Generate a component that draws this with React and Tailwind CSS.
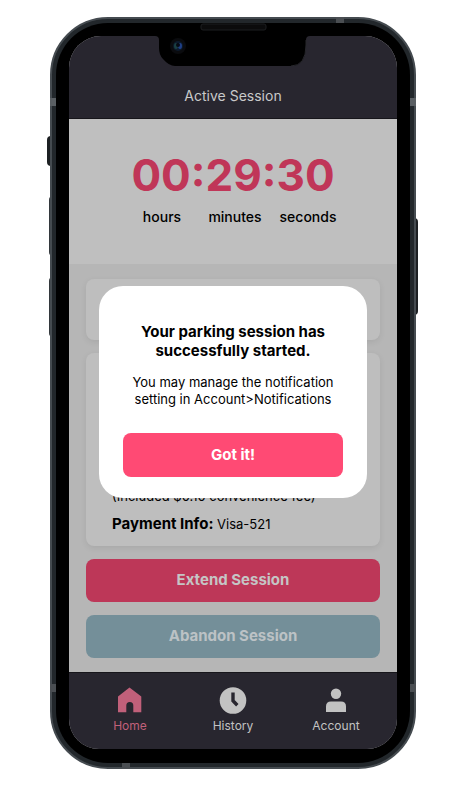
function Notch() {
  return (
    <svg
      className="absolute left-1/2 top-0 -translate-x-1/2"
      width="160"
      height="50"
      viewBox="0 0 160 50"
      aria-hidden="true"
    >
      <path
        d="M0 8H160V19H157Q153 19 153 23V28Q153 49 138 49H22Q16 49 10 42Q6 38 6 31V23Q6 19 2 19H0Z"
        fill="#000"
      />
      <path d="M153 23V28Q153 49 138 49" fill="none" stroke="#26262b" />
      <rect x="48" y="7" width="65" height="6" rx="2" fill="#0b0b0c" stroke="#1d1e20" />
      <circle cx="25" cy="29" r="8" fill="#0a0b0e" />
      <circle cx="25" cy="29" r="5" fill="#0c1a2c" />
      <ellipse cx="23" cy="29" rx="2" ry="3" fill="#1a3f42" />
      <ellipse cx="27" cy="29" rx="2" ry="3" fill="#1f3f86" />
      <circle cx="25" cy="28" r="2" fill="#060a14" />
    </svg>
  );
}

function HomeIcon() {
  return (
    <svg width="28" height="28" viewBox="0 0 28 28" aria-hidden="true">
      <path
        d="M13.500 1.500L25.300 10.500V26.300H17.300V19.500A3.500 3.500 0 0 0 10.300 19.500V26.300H2V10.500Z"
        fill="#c1607a"
      />
    </svg>
  );
}

function HistoryIcon() {
  return (
    <svg width="28" height="28" viewBox="0 0 28 28" aria-hidden="true">
      <circle cx="14" cy="14.500" r="13.300" fill="#c2c2c2" />
      <path d="M14 6.500V14.800L18.300 19.200" fill="none" stroke="#28262f" strokeWidth="3.400" />
    </svg>
  );
}

function AccountIcon() {
  return (
    <svg width="28" height="28" viewBox="0 0 28 28" aria-hidden="true">
      <circle cx="14" cy="7.800" r="5.200" fill="#c2c2c2" />
      <path d="M4 26V20.500Q4 15.500 9 15.500H19Q24 15.500 24 20.500V26Z" fill="#c2c2c2" />
    </svg>
  );
}

const tabs = [
  { label: "Home", Icon: HomeIcon, color: "text-[#c1607a]" },
  { label: "History", Icon: HistoryIcon, color: "text-[#c2c2c2]" },
  { label: "Account", Icon: AccountIcon, color: "text-[#c2c2c2]" },
];

function Phone({ children }) {
  return (
    <div className="relative w-full max-w-[366px]">
      <div className="absolute -left-[3px] top-[119px] h-[30px] w-2 rounded-l-sm bg-[#1d2023]" />
      <div className="absolute -left-px top-[179px] h-[60px] w-2 rounded-l-sm bg-[#33383c]" />
      <div className="absolute -left-px top-[260px] h-[60px] w-2 rounded-l-sm bg-[#33383c]" />
      <div className="absolute -right-[2px] top-[201px] h-[97px] w-2 rounded-r-sm bg-[#1d2023]" />
      <div className="relative rounded-[58px] border-2 border-[#454b50] bg-[#22272b] p-1">
        <div className="rounded-[52px] bg-black px-[13px] pb-[14px] pt-[13px]">{children}</div>
        <div className="absolute -left-[2px] top-[79px] h-2 w-[6px] bg-[#5a5f63]" />
        <div className="absolute -right-[2px] top-[79px] h-2 w-[6px] bg-[#5a5f63]" />
        <div className="absolute -left-[2px] bottom-[75px] h-2 w-[6px] bg-[#4a4e52]" />
        <div className="absolute -right-[2px] bottom-[75px] h-2 w-[6px] bg-[#4a4e52]" />
        <div className="absolute -top-[2px] right-[70px] h-[6px] w-2 bg-[#4a4e52]" />
        <div className="absolute -bottom-[2px] left-[70px] h-[6px] w-2 bg-[#4a4e52]" />
      </div>
      <Notch />
    </div>
  );
}

export default function App() {
  return (
    <div className="flex min-h-screen justify-center bg-white pb-4 pt-[17px] font-['Inter',sans-serif] text-black">
      <Phone>
        <div className="relative overflow-hidden rounded-b-[30px] rounded-t-[32px] bg-[#b6b6b6]">
          <header className="border-b border-[#17161b] bg-[#28262f] pb-[11px] pt-[49px] text-center">
            <h1 className="text-sm leading-[22px] text-[#c9c9c9]">Active Session</h1>
          </header>

          <section className="bg-[#bfbfbf] pb-[37px] pt-7 text-center">
            <p className="text-[44px] font-bold leading-[56px] text-[#c03658] [font-feature-settings:'case']">
              00:29:30
            </p>
            <div className="grid grid-cols-[73px_73px_73px] justify-center pl-1 pt-1 text-sm font-medium leading-5">
              <span>hours</span>
              <span>minutes</span>
              <span>seconds</span>
            </div>
          </section>

          <main className="flex flex-col gap-[13px] px-[17px] pb-[14px] pt-[15px]">
            <div className="h-[61px] rounded-lg bg-[#bebebe] shadow-[0_2px_6px_rgba(0,0,0,0.08)]" />
            <div className="flex min-h-[193px] flex-col justify-end rounded-lg bg-[#bebebe] pb-3 pl-[26px] shadow-[0_2px_6px_rgba(0,0,0,0.08)]">
              <p className="text-[13px] leading-[18px]">(Included $0.10 convenience fee)</p>
              <p className="pt-[9px] text-[13px] leading-5">
                <strong className="text-[15px]">Payment Info:</strong> Visa-521
              </p>
            </div>
            <button className="h-[43px] rounded-lg bg-[#bd3758] text-[15px] font-bold text-[#c5c5c5]">
              Extend Session
            </button>
            <button className="h-[43px] rounded-lg bg-[#748f99] text-[15px] font-bold text-[#bcc2c5]">
              Abandon Session
            </button>
          </main>

          <nav className="flex justify-center gap-[23px] border-t border-[#17161b] bg-[#28262f] pb-[15px] pt-[13px]">
            {tabs.map(({ label, Icon, color }) => (
              <a
                key={label}
                href="#"
                className={`flex w-20 flex-col items-center gap-1 text-xs leading-4 ${color}`}
              >
                <Icon />
                {label}
              </a>
            ))}
          </nav>

          <div
            role="dialog"
            aria-labelledby="dialog-title"
            className="absolute inset-x-[30px] top-[250px] rounded-3xl bg-white px-6 pb-[21px] pt-9 text-center"
          >
            <h2 id="dialog-title" className="text-[15px] font-bold leading-[19px]">
              Your parking session has
              <br />
              successfully started.
            </h2>
            <p className="pt-[14px] text-[13px] leading-[17px]">
              You may manage the notification
              <br />
              setting in Account&gt;Notifications
            </p>
            <button className="mt-[25px] h-11 w-full rounded-lg bg-[#ff4a74] text-[15px] font-bold text-white">
              Got it!
            </button>
          </div>
        </div>
      </Phone>
    </div>
  );
}
